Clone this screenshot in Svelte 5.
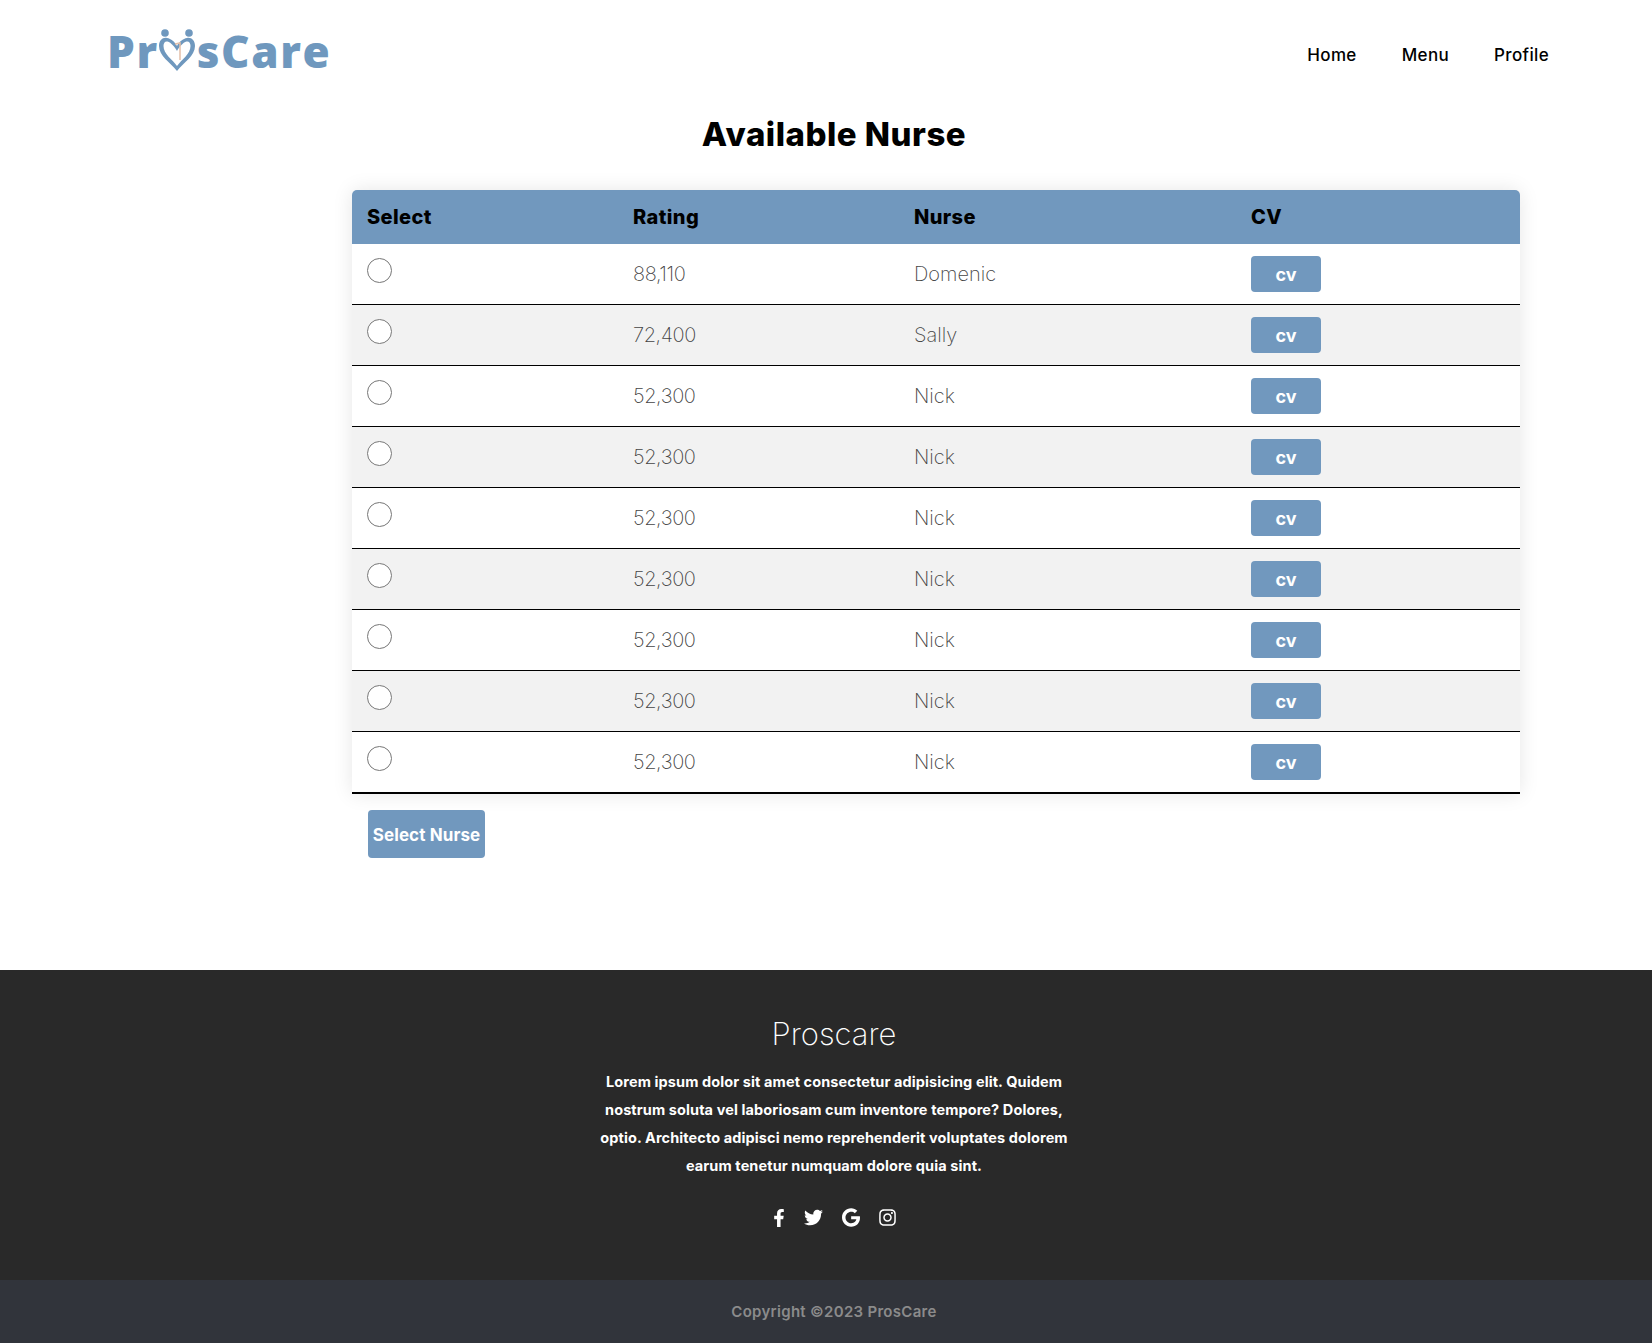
<script>
    const nurses = [
        { rating: '88,110', name: 'Domenic' },
        { rating: '72,400', name: 'Sally' },
        { rating: '52,300', name: 'Nick' },
        { rating: '52,300', name: 'Nick' },
        { rating: '52,300', name: 'Nick' },
        { rating: '52,300', name: 'Nick' },
        { rating: '52,300', name: 'Nick' },
        { rating: '52,300', name: 'Nick' },
        { rating: '52,300', name: 'Nick' }
    ];
</script>

<header class="nav">
    <a class="logo" href="#top">Pr<svg class="heart" viewBox="0 0 40 44" width="40" height="44" aria-hidden="true">
            <circle cx="8" cy="4" r="3.8" fill="#6f98be" />
            <circle cx="32" cy="4" r="3.8" fill="#6f98be" />
            <path d="M20 42C13 33 2 27 2 17C2 11 6 8 10 9C14 9.5 18 13 20 17C22 13 26 9.5 30 9C34 8 38 11 38 17C38 27 27 33 20 42ZM20 37C25 30 33.5 25 33.5 17C33.5 14 32 12 29.5 12.5C26 13.5 22 18 20 22C18 18 14 13.5 10.5 12.5C8 12 6.5 14 6.5 17C6.5 25 15 30 20 37Z" fill="#6f98be" />
            <path d="M18 15L23 14V31" fill="none" stroke="#e3bfa8" stroke-width="1.5" />
        </svg>sCare</a>
    <nav>
        <a href="#home">Home</a>
        <a href="#menu">Menu</a>
        <a href="#profile">Profile</a>
    </nav>
</header>

<main>
    <h1>Available Nurse</h1>
    <div class="table-wrap">
        <table>
            <thead>
                <tr>
                    <th class="c1">Select</th>
                    <th class="c2">Rating</th>
                    <th class="c3">Nurse</th>
                    <th>CV</th>
                </tr>
            </thead>
            <tbody>
                {#each nurses as nurse}
                    <tr>
                        <td class="radio-cell"><input type="radio" name="nurse" /></td>
                        <td class="rating">{nurse.rating}</td>
                        <td>{nurse.name}</td>
                        <td><button class="cv">cv</button></td>
                    </tr>
                {/each}
            </tbody>
        </table>
    </div>
    <button class="select">Select Nurse</button>
</main>

<footer>
    <div class="foot-top">
        <h2>Proscare</h2>
        <p>
            Lorem ipsum dolor sit amet consectetur adipisicing elit. Quidem<br />
            nostrum soluta vel laboriosam cum inventore tempore? Dolores,<br />
            optio. Architecto adipisci nemo reprehenderit voluptates dolorem<br />
            earum tenetur numquam dolore quia sint.
        </p>
        <div class="social">
            <svg viewBox="0 0 320 512" width="12" height="18"><path d="M279.14 288l14.22-92.66h-88.91v-60.13c0-25.35 12.42-50.06 52.24-50.06h40.42V6.26S260.43 0 225.36 0c-73.22 0-121.08 44.38-121.08 124.72v70.62H22.89V288h81.39v224h100.17V288z" /></svg>
            <svg viewBox="0 0 512 512" width="19" height="19"><path d="M459.37 151.716c.325 4.548.325 9.097.325 13.645 0 138.72-105.583 298.558-298.558 298.558-59.452 0-114.68-17.219-161.137-47.106 8.447.974 16.568 1.299 25.34 1.299 49.055 0 94.213-16.568 130.274-44.832-46.132-.975-84.792-31.188-98.112-72.772 6.498.974 12.995 1.624 19.818 1.624 9.421 0 18.843-1.3 27.614-3.573-48.081-9.747-84.143-51.98-84.143-102.985v-1.299c13.969 7.797 30.214 12.67 47.431 13.319-28.264-18.843-46.781-51.005-46.781-87.391 0-19.492 5.197-37.36 14.294-52.954 51.655 63.675 129.3 105.258 216.365 109.807-1.624-7.797-2.599-15.918-2.599-24.04 0-57.828 46.782-104.934 104.934-104.934 30.213 0 57.502 12.67 76.67 33.137 23.715-4.548 46.456-13.32 66.599-25.34-7.798 24.366-24.366 44.833-46.132 57.827 21.117-2.273 41.584-8.122 60.426-16.243-14.292 20.791-32.161 39.308-52.628 54.253z" /></svg>
            <svg viewBox="0 0 488 512" width="18" height="19"><path d="M488 261.8C488 403.3 391.1 504 248 504 110.8 504 0 393.2 0 256S110.8 8 248 8c66.8 0 123 24.5 166.3 64.9l-67.5 64.9C258.5 52.6 94.3 116.6 94.3 256c0 86.5 69.1 156.6 153.7 156.6 98.2 0 135-70.4 140.8-106.9H248v-85.3h236.1c2.3 12.7 3.9 24.9 3.9 41.4z" /></svg>
            <svg viewBox="0 0 448 512" width="17" height="19"><path d="M224.1 141c-63.6 0-114.9 51.3-114.9 114.9s51.3 114.9 114.9 114.9S339 319.5 339 255.9 287.7 141 224.1 141zm0 189.6c-41.1 0-74.7-33.5-74.7-74.7s33.5-74.7 74.7-74.7 74.7 33.5 74.7 74.7-33.6 74.7-74.7 74.7zm146.4-194.3c0 14.9-12 26.8-26.8 26.8-14.9 0-26.8-12-26.8-26.8s12-26.8 26.8-26.8 26.8 12 26.8 26.8zm76.1 27.2c-1.7-35.9-9.9-67.7-36.2-93.9-26.2-26.2-58-34.4-93.9-36.2-37-2.1-147.9-2.1-184.9 0-35.8 1.7-67.6 9.9-93.9 36.1s-34.4 58-36.2 93.9c-2.1 37-2.1 147.9 0 184.9 1.7 35.9 9.9 67.7 36.2 93.9s58 34.4 93.9 36.2c37 2.1 147.9 2.1 184.9 0 35.9-1.7 67.7-9.9 93.9-36.2 26.2-26.2 34.4-58 36.2-93.9 2.1-37 2.1-147.8 0-184.8zM398.8 388c-7.8 19.6-22.9 34.7-42.6 42.6-29.5 11.7-99.5 9-132.1 9s-102.7 2.6-132.1-9c-19.6-7.8-34.7-22.9-42.6-42.6-11.7-29.5-9-99.5-9-132.1s-2.6-102.7 9-132.1c7.8-19.6 22.9-34.7 42.6-42.6 29.5-11.7 99.5-9 132.1-9s102.7-2.6 132.1 9c19.6 7.8 34.7 22.9 42.6 42.6 11.7 29.5 9 99.5 9 132.1s2.7 102.7-9 132.1z" /></svg>
        </div>
    </div>
    <div class="copy">Copyright ©2023 ProsCare</div>
</footer>

<style>
    :global(body) {
        font-family: Inter, "Liberation Sans", sans-serif;
        background: #fff;
    }

    .nav {
        display: flex;
        justify-content: space-between;
        align-items: center;
        height: 105px;
        padding: 0 103px 0 107px;
    }

    .logo {
        display: flex;
        align-items: center;
        margin-top: -4px;
        font-family: "Open Sans", sans-serif;
        font-size: 44px;
        font-weight: 800;
        letter-spacing: 1.6px;
        line-height: 60px;
        color: #6f98be;
        text-decoration: none;
    }

    .heart {
        margin: 0 0 0 -2px;
    }

    nav {
        display: flex;
        gap: 45px;
        padding-top: 4px;
    }

    nav a {
        font-size: 17px;
        font-weight: 500;
        letter-spacing: 0.35px;
        color: #000;
        text-decoration: none;
    }

    h1 {
        margin: 0;
        padding-left: 16px;
        font-size: 33px;
        font-weight: 800;
        letter-spacing: 0.5px;
        line-height: 58px;
        text-align: center;
        color: #000;
    }

    .table-wrap {
        margin: 27px 132px 0 352px;
        border-radius: 5px 5px 0 0;
        box-shadow: 0 0 20px rgba(0, 0, 0, 0.1);
    }

    table {
        width: 100%;
        table-layout: fixed;
        border-collapse: separate;
        border-spacing: 0;
    }

    thead tr {
        height: 54px;
        background: #7198be;
    }

    th {
        padding: 0 0 0 15px;
        text-align: left;
        font-size: 20px;
        font-weight: 800;
        letter-spacing: 0.4px;
        color: #000;
    }

    th:first-child {
        border-top-left-radius: 5px;
    }

    th:last-child {
        border-top-right-radius: 5px;
    }

    .c1 {
        width: 251px;
    }

    .c2 {
        width: 266px;
    }

    .c3 {
        width: 322px;
    }

    tbody tr {
        height: 61px;
    }

    tbody tr:nth-child(even) {
        background: #f2f2f2;
    }

    td {
        padding: 0 0 0 15px;
        border-bottom: 1px solid #000;
        font-size: 20px;
        font-weight: 200;
        color: #444;
    }

    tbody tr:last-child {
        height: 62px;
    }

    tbody tr:last-child td {
        border-bottom-width: 2px;
    }

    .rating {
        letter-spacing: -0.4px;
    }

    .radio-cell {
        vertical-align: top;
        padding-top: 14px;
    }

    input[type="radio"] {
        display: block;
        width: 25px;
        height: 25px;
        margin: 0;
    }

    .cv {
        display: block;
        width: 70px;
        height: 36px;
        border: 0;
        border-radius: 4px;
        background: #7198be;
        color: #fff;
        font-family: inherit;
        font-size: 18px;
        font-weight: 700;
    }

    .select {
        display: block;
        width: 117px;
        height: 48px;
        margin: 16px 0 0 368px;
        padding: 2px 0 0;
        border: 0;
        border-radius: 4px;
        background: #7198be;
        color: #fff;
        font-family: inherit;
        font-size: 17px;
        font-weight: 700;
        letter-spacing: 0.1px;
    }

    footer {
        margin-top: 112px;
        color: #fff;
    }

    .foot-top {
        height: 310px;
        box-sizing: border-box;
        padding: 43px 0 0 16px;
        background: #292929;
        text-align: center;
    }

    h2 {
        margin: 0;
        font-size: 31px;
        font-weight: 200;
        line-height: 42px;
    }

    p {
        margin: 13px 0 0;
        font-size: 14.5px;
        font-weight: 700;
        letter-spacing: 0.1px;
        line-height: 28px;
    }

    .social {
        display: flex;
        justify-content: center;
        align-items: center;
        gap: 19px;
        margin-top: 28px;
    }

    .social svg {
        fill: #fff;
    }

    .copy {
        height: 63px;
        padding-left: 16px;
        background: #31343b;
        color: #8b8b8b;
        font-size: 15px;
        font-weight: 600;
        letter-spacing: 0.3px;
        line-height: 63px;
        text-align: center;
    }
</style>
